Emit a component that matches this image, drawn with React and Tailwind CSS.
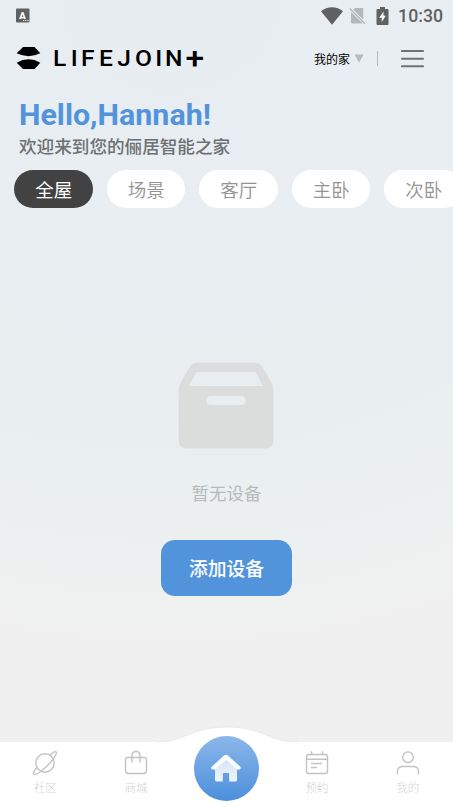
import React, { useState } from "react";

const rooms = ["全屋", "场景", "客厅", "主卧", "次卧"];

function StatusBar() {
  return (
    <div className="flex h-8 items-center justify-between pl-4 pr-[10px] text-[#5f6163]">
      <svg width="14" height="15" viewBox="0 0 14 15" className="-mt-0.5">
        <rect x="0" y="0.5" width="13.5" height="14" rx="1" fill="currentColor" />
        <text x="3.2" y="10.8" fontSize="9.5" fontWeight="900" fontFamily="Roboto, sans-serif" fill="#fff">A</text>
        <path d="M7 12.6h1.2M9.2 12.6h1.2M11.4 12.6h1.2" stroke="#fff" strokeWidth="1" />
      </svg>
      <div className="flex items-center">
        <svg width="22" height="18" viewBox="0 0 22 18">
          <path d="M0 4.2C6.5-1 15.5-1 22 4.2L11 17.8Z" fill="currentColor" />
        </svg>
        <svg width="18" height="18" viewBox="0 0 18 18" className="ml-[6px]">
          <path d="M6 1H13.2Q14.2 1 14.2 2V12.5L4.3 2.7ZM2 5L13.5 16.3Q13.2 16.5 12.5 16.5H3Q2 16.5 2 15.5Z" fill="#b4b7b9" />
          <path d="M0.8 1.5L16 16.8" stroke="#b4b7b9" strokeWidth="1.4" />
        </svg>
        <svg width="13" height="18" viewBox="0 0 13 18" className="ml-[9px]">
          <path d="M4 0h5v2h2.5q1 0 1 1v14q0 1-1 1h-10q-1 0-1-1V3q0-1 1-1H4z" fill="currentColor" />
          <path d="M7.5 4.5L3.2 10.8h2.6V15l4-6.2H7.5z" fill="#fff" />
        </svg>
        <span className="ml-[9px] pt-0.5 font-[Roboto] text-[17.7px] font-medium leading-none">10:30</span>
      </div>
    </div>
  );
}

function Logo() {
  return (
    <svg width="190" height="28" viewBox="0 -2 190 28" className="overflow-visible">
      <path d="M7 0H18.5L24.3 6.3Q18.5 9.2 12.5 9.2Q6.5 9.2 0.7 6.3Z" />
      <path d="M7 22H18.5L24.3 15.7Q18.5 12.3 12.5 12.3Q6.5 12.3 0.7 15.7Z" />
      <text
        transform="scale(1.12 1)"
        x="33 48.8 58 74 90.5 106.2 124.4 133 151.3"
        y="18.7"
        fontSize="22"
        fontWeight="500"
        fontFamily="Roboto, sans-serif"
      >
        LIFEJOIN<tspan fontSize="30" fontWeight="500" dy="1.8">+</tspan>
      </text>
    </svg>
  );
}

function Header() {
  return (
    <header className="flex h-[53px] items-center pl-4 pr-[29px]">
      <Logo />
      <div className="ml-auto flex items-center">
        <span className="text-[12px] leading-none text-black">我的家</span>
        <svg width="10" height="9" viewBox="0 0 10 9" className="ml-1">
          <path d="M0.5 0.5h9L5 8.5z" fill="#b8babc" />
        </svg>
        <span className="ml-[13px] h-[15px] w-px bg-[#b9bcbe]" />
        <svg width="23" height="19" viewBox="0 0 23 19" className="ml-[23px]">
          <path d="M1 2h21M1 9.7h21M1 17.3h21" stroke="#707274" strokeWidth="2.1" strokeLinecap="round" />
        </svg>
      </div>
    </header>
  );
}

function EmptyState() {
  return (
    <section className="flex flex-1 flex-col items-center pt-[154.5px]">
      <svg width="96" height="87" viewBox="0 0 96 87" className="-ml-px">
        <path
          fillRule="evenodd"
          fill="#dbdddc"
          d="M20 0.5H76Q81 0.5 84 4.5L93 20Q95.5 24 95.5 29V78Q95.5 86.5 87 86.5H9Q0.5 86.5 0.5 78V29Q0.5 24 3 20L12 4.5Q15 0.5 20 0.5ZM18.5 10L11 24H85L77.5 10ZM33 34Q28.5 34 28.5 38.5T33 43H63Q67.5 43 67.5 38.5T63 34Z"
        />
      </svg>
      <p className="mt-[31px] text-[17.5px] leading-[26px] text-[#b7babb]">暂无设备</p>
      <button className="mt-[34px] h-14 w-[131px] rounded-[14px] bg-[#5294dc] text-[18.8px] font-medium text-white">
        添加设备
      </button>
    </section>
  );
}

function NavItem({ label, children }) {
  return (
    <a className="flex flex-1 flex-col items-center pt-2">
      <svg
        width="26"
        height="26"
        viewBox="0 0 26 26"
        fill="none"
        stroke="#c3c3c3"
        strokeWidth="1.4"
        strokeLinecap="round"
        strokeLinejoin="round"
      >
        {children}
      </svg>
      <span className="mt-[3px] text-[11.5px] font-thin leading-4 text-[#b4b4b4]">{label}</span>
    </a>
  );
}

function TabBar() {
  return (
    <nav className="relative flex h-[65px] bg-white">
      {/* bump behind the home button */}
      <svg width="140" height="17" viewBox="0 0 140 17" className="absolute -top-4 left-1/2 -translate-x-1/2">
        <path d="M0 16.5C28 16.5 34 1.2 70 1.2S112 16.5 140 16.5V17H0Z" fill="#fff" />
        <path d="M0 16C28 16 34 1 70 1S112 16 140 16" fill="none" stroke="#e8e8e8" strokeWidth="0.8" />
      </svg>
      <NavItem label="社区">
        <circle cx="13" cy="13" r="9.2" />
        <path d="M18.5 4.5C21 2.3 23.5 1.3 24.2 2C25.5 3.6 21 10.2 15 16S3.5 25.5 1.9 24C1 23 2.2 20.8 4.5 18" />
      </NavItem>
      <NavItem label="商城">
        <path d="M4.5 7.5H21.5Q23.5 7.5 23.5 9.5V20.5Q23.5 23.5 20.5 23.5H5.5Q2.5 23.5 2.5 20.5V9.5Q2.5 7.5 4.5 7.5Z" />
        <path d="M9 12V5.5Q9 1.5 13 1.5T17 5.5V12" />
      </NavItem>
      <div className="relative flex flex-1 justify-center">
        <button className="-mt-[6px] flex h-[65px] w-[65px] shrink-0 items-center justify-center rounded-full bg-gradient-to-b from-[#8bb7e9] to-[#4b8fdc]">
          <svg width="32" height="29" viewBox="0 0 32 29">
            <defs>
              <linearGradient id="house" x1="0" y1="0" x2="0" y2="1">
                <stop offset="0" stopColor="#d3e3f6" />
                <stop offset="1" stopColor="#eff5fc" />
              </linearGradient>
            </defs>
            <path d="M5 12L16 3L27 12V26Q27 27.5 25.5 27.5H19.2V20Q19.2 19 18.2 19H13.8Q12.8 19 12.8 20V27.5H6.5Q5 27.5 5 26Z" fill="url(#house)" />
            <path d="M16 0.8Q17 0.8 18 1.5L30.3 12.7Q31.3 14 30.3 15Q29.5 15.7 27 15.5L16 5.8L5 15.5Q2.5 15.7 1.7 15Q0.7 14 1.7 12.7L14 1.5Q15 0.8 16 0.8Z" fill="#fafcff" />
          </svg>
        </button>
      </div>
      <NavItem label="预约">
        <rect x="2.5" y="4.5" width="21" height="19" rx="2.5" />
        <path d="M2.5 9.3h21M7.5 1.8v2.5M18.5 1.8v2.5M7.5 13.5h10M7.5 17.5h5" />
      </NavItem>
      <NavItem label="我的">
        <circle cx="13" cy="7.2" r="5.3" />
        <path d="M2.5 24V21.5Q2.5 16.5 8 16.5H18Q23.5 16.5 23.5 21.5V24" />
      </NavItem>
    </nav>
  );
}

export default function App() {
  const [active, setActive] = useState(0);

  return (
    <div className="flex h-[807px] w-full flex-col overflow-hidden bg-[radial-gradient(ellipse_750px_640px_at_170px_0px,#e8edf1_0%,#e8eef1_45%,#e9eff0_70%,#ebefef_80%,#edf0f0_88%,#f0f2f1_97%,#f0f0f0_100%)] font-['Noto_Sans_CJK_SC',sans-serif]">
      <StatusBar />
      <Header />
      <div className="pl-[19px]">
        <h1 className="pt-[12px] font-[Roboto] text-[30.4px] font-bold leading-9 text-[#5294dc]">Hello,Hannah!</h1>
        <p className="text-[17.6px] font-medium leading-[26px] text-[#6d7072]">欢迎来到您的俪居智能之家</p>
      </div>
      <div className="mt-[11px] flex gap-[14px] pl-[14.4px]">
        {rooms.map((room, i) => (
          <button
            key={room}
            onClick={() => setActive(i)}
            className={`h-[37.5px] w-[78.5px] shrink-0 rounded-full pt-0.5 text-[18.5px] ${
              active === i ? "bg-[#424242] text-white" : "bg-white font-[350] text-[#949494]"
            }`}
          >
            {room}
          </button>
        ))}
      </div>
      <EmptyState />
      <TabBar />
    </div>
  );
}
